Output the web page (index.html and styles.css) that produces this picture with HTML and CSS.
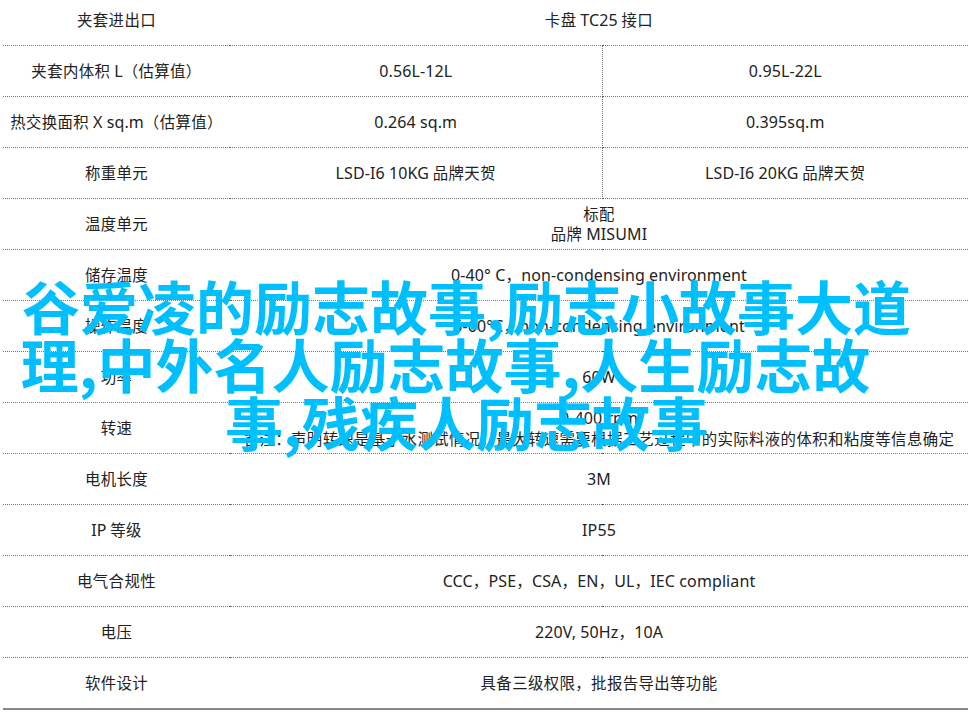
FILE: index.html
```html
<!DOCTYPE html>
<html lang="zh-CN">
<head>
<meta charset="utf-8">
<title>谷爱凌的励志故事</title>
<link rel="stylesheet" href="styles.css">
</head>
<body>
<main class="page">
<table class="spec">
<colgroup><col class="c1"><col class="c2"><col class="c3"></colgroup>
<tbody>
<tr><td>夹套进出口</td><td class="merged" colspan="2">卡盘 <span class="lat">TC25</span> 接口</td></tr>
<tr class="split"><td>夹套内体积 <span class="lat">L</span>（估算值）</td><td><span class="lat">0.56L-12L</span></td><td><span class="lat">0.95L-22L</span></td></tr>
<tr class="split"><td>热交换面积 <span class="lat">X sq.m</span>（估算值）</td><td><span class="lat">0.264 sq.m</span></td><td><span class="lat">0.395sq.m</span></td></tr>
<tr class="split"><td>称重单元</td><td><span class="lat">LSD-I6 10KG</span> 品牌天贺</td><td><span class="lat">LSD-I6 20KG</span> 品牌天贺</td></tr>
<tr><td>温度单元</td><td class="merged" colspan="2">标配<br>品牌 <span class="lat">MISUMI</span></td></tr>
<tr><td>储存温度</td><td class="merged" colspan="2"><span class="lat">0-40° C</span>，<span class="lat">non-condensing environment</span></td></tr>
<tr><td>操作温度</td><td class="merged" colspan="2"><span class="lat">5-60°C</span>，<span class="lat">non-condensing environment</span></td></tr>
<tr><td>功率</td><td class="merged" colspan="2"><span class="lat">60W</span></td></tr>
<tr><td>转速</td><td class="merged" colspan="2"><span class="lat">0-400 rpm</span><br>备注：声明转速是基于水测试情况，最大转速需要根据工艺过程中的实际料液的体积和粘度等信息确定</td></tr>
<tr><td>电机长度</td><td class="merged" colspan="2"><span class="lat">3M</span></td></tr>
<tr><td><span class="lat">IP</span> 等级</td><td class="merged" colspan="2"><span class="lat">IP55</span></td></tr>
<tr><td>电气合规性</td><td class="merged" colspan="2"><span class="lat">CCC</span>，<span class="lat">PSE</span>，<span class="lat">CSA</span>，<span class="lat">EN</span>，<span class="lat">UL</span>，<span class="lat">IEC compliant</span></td></tr>
<tr><td>电压</td><td class="merged" colspan="2"><span class="lat">220V, 50Hz</span>，<span class="lat">10A</span></td></tr>
<tr><td>软件设计</td><td class="merged" colspan="2">具备三级权限，批报告导出等功能</td></tr>
</tbody>
</table>
<h1 class="title">谷爱凌的励志故事,励志小故事大道<br><span class="shift">理,中外名人励志故事,人生励志故</span><br>事,残疾人励志故事</h1>
</main>
</body>
</html>
```
FILE: styles.css
```css
html, body { margin: 0; padding: 0; background: #fff; }
.page { position: relative; width: 971px; height: 716px; overflow: hidden; font-family: "Noto Sans CJK SC", "Noto Sans", sans-serif; }
.spec { border-collapse: collapse; table-layout: fixed; width: 965px; margin: -5px 0 0 3px; font-size: 15.4px; letter-spacing: .4px; line-height: 20px; color: #222; text-align: center; }
.c1 { width: 227px; }
.c2 { width: 372px; }
.spec td { position: relative; height: 48px; padding: 0 0 2px; border-bottom: 1px dotted #777; }
.spec tr:last-child td { border-bottom: 2px solid #888; }
.spec td + td::after { content: ""; position: absolute; left: -1px; bottom: -1px; width: 2px; height: 1px; background: #555; }
.spec td.merged::before { content: ""; position: absolute; left: 372px; bottom: -1px; width: 2px; height: 1px; background: #555; }
.spec tr:last-child td::after, .spec tr:last-child td::before { display: none; }
.split td:nth-child(2) { border-right: 1px dotted #777; }
.lat { font-family: "Noto Sans", sans-serif; font-size: 16px; letter-spacing: .1px; }
.title { position: absolute; left: 0; right: 38px; top: 276px; margin: 0; text-align: center; font-family: "Noto Sans CJK SC", sans-serif; font-size: 58px; line-height: 58px; font-weight: 700; color: #00bfff; white-space: nowrap; }
.shift { margin-right: 42px; }
```
